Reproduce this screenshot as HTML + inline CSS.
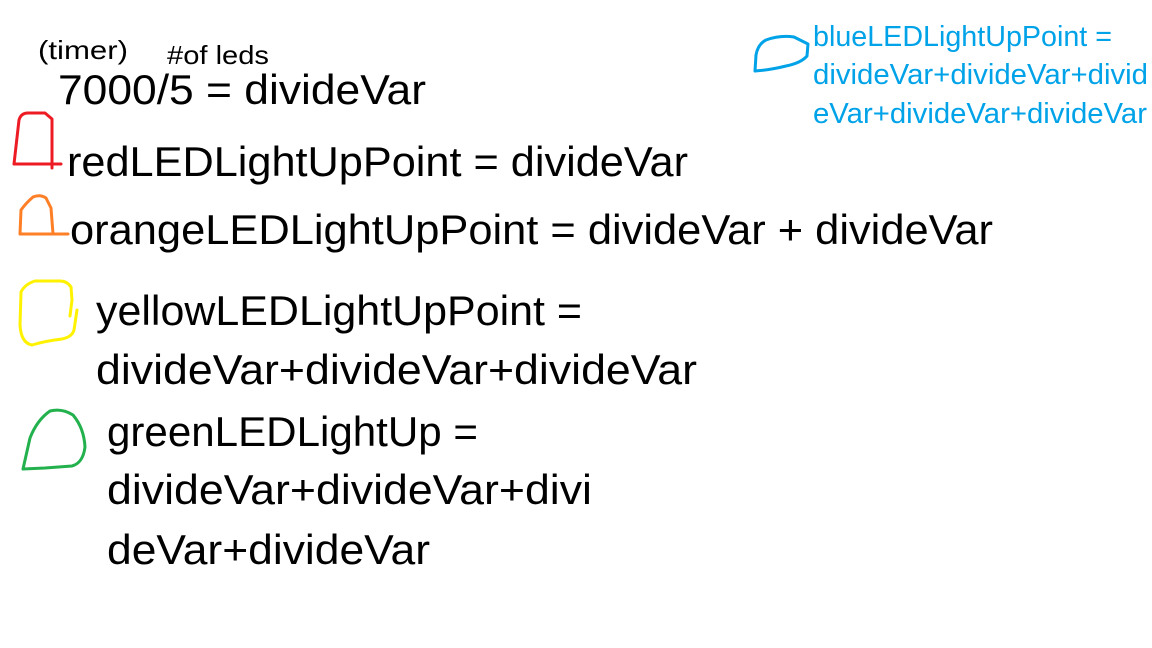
<!DOCTYPE html>
<html><head><meta charset="utf-8"><style>
html,body{margin:0;padding:0;background:#fff;width:1152px;height:648px;overflow:hidden}
svg{display:block}
text{font-family:"Liberation Sans",sans-serif}
</style></head><body>
<svg width="1152" height="648" viewBox="0 0 1152 648" xmlns="http://www.w3.org/2000/svg">
<rect width="1152" height="648" fill="#fff"/>
<g fill="#000">
<text x="38" y="59" font-size="26" textLength="90" lengthAdjust="spacingAndGlyphs">(timer)</text>
<text x="167" y="64" font-size="26" textLength="102" lengthAdjust="spacingAndGlyphs">#of leds</text>
<text x="58" y="104" font-size="42" textLength="368" lengthAdjust="spacingAndGlyphs">7000/5 = divideVar</text>
<text x="67" y="176" font-size="42" textLength="621" lengthAdjust="spacingAndGlyphs">redLEDLightUpPoint = divideVar</text>
<text x="70" y="244" font-size="42" textLength="923" lengthAdjust="spacingAndGlyphs">orangeLEDLightUpPoint = divideVar + divideVar</text>
<text x="96" y="325" font-size="42" textLength="486" lengthAdjust="spacingAndGlyphs">yellowLEDLightUpPoint =</text>
<text x="96" y="384" font-size="42" textLength="601" lengthAdjust="spacingAndGlyphs">divideVar+divideVar+divideVar</text>
<text x="107" y="446" font-size="42" textLength="371" lengthAdjust="spacingAndGlyphs">greenLEDLightUp =</text>
<text x="107" y="504" font-size="42" textLength="485" lengthAdjust="spacingAndGlyphs">divideVar+divideVar+divi</text>
<text x="107" y="564" font-size="42" textLength="323" lengthAdjust="spacingAndGlyphs">deVar+divideVar</text>
</g>
<g fill="#00a2e8">
<text x="813" y="46" font-size="29" textLength="299" lengthAdjust="spacingAndGlyphs">blueLEDLightUpPoint =</text>
<text x="813" y="84" font-size="29" textLength="335" lengthAdjust="spacingAndGlyphs">divideVar+divideVar+divid</text>
<text x="813" y="123" font-size="29" textLength="334" lengthAdjust="spacingAndGlyphs">eVar+divideVar+divideVar</text>
</g>
<g fill="none" stroke-width="3" stroke-linecap="round" stroke-linejoin="round">
<path stroke="#ed1c24" d="M14 164 L19 120 Q21 113 28 113 L45 113 L52 119 L52 168 M14 164 L61 164"/>
<path stroke="#ff7f27" d="M20 234 L21 210 Q26 203 33 197 Q40 194 46 198 L51 208 L53 234 M20 234 L68 234"/>
<path stroke="#fff200" d="M70 316 L72 300 L71 287 Q67 281 60 281 L35 281 Q25 284 21 292 L20 325 Q21 343 32 345 Q45 341 62 339 Q72 337 74 330 L77 310"/>
<path stroke="#22b14c" d="M23 469 L30 438 Q37 420 50 411 Q62 408 73 415 Q84 428 85 447 Q83 463 72 466 Q58 467 45 468 Z"/>
<path stroke="#00a2e8" d="M755 71 L756 55 Q758 44 766 40 Q780 35 794 37 L808 44 L807 56 Q801 63 786 66 Q770 70 755 71"/>
</g>
</svg>
</body></html>
